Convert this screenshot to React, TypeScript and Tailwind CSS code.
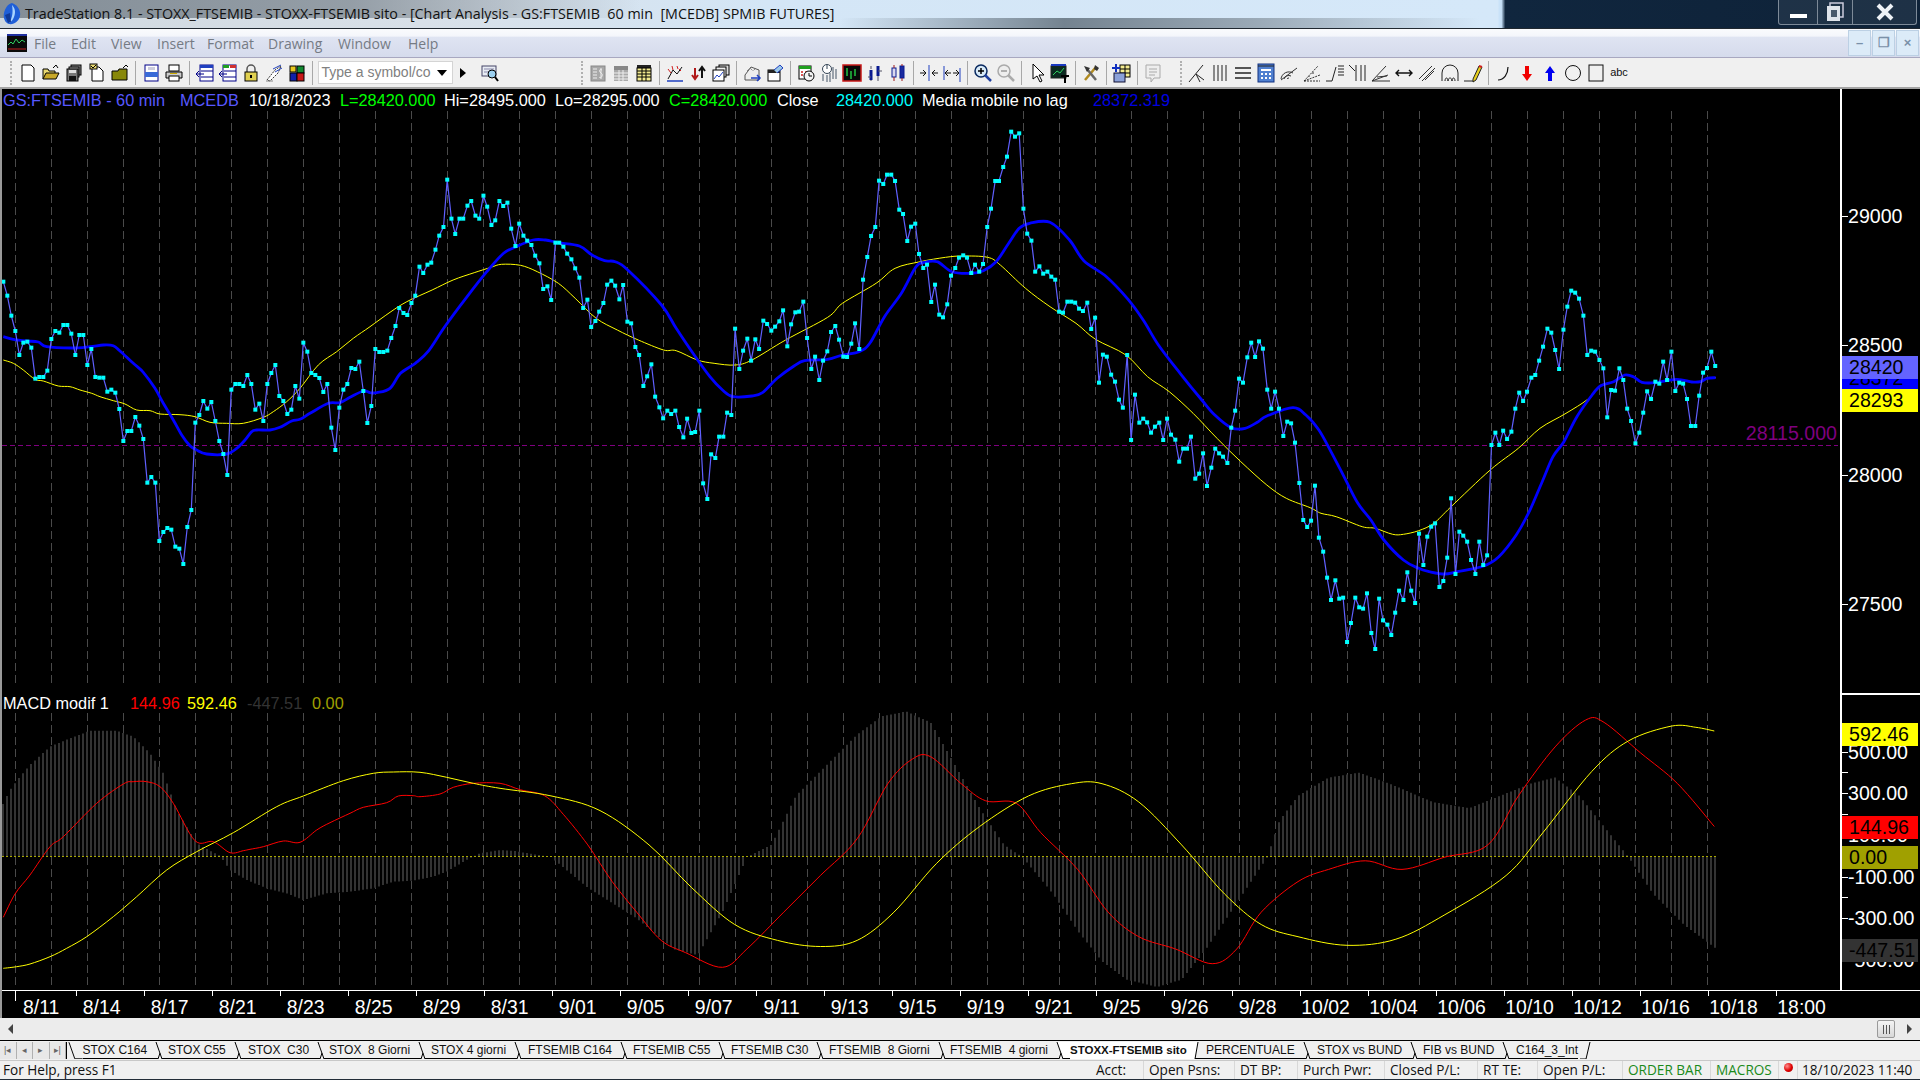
import type { ReactNode } from "react"

type Pt = [number, number]

// digitised from the chart, in crop coordinates
const conv = (raw: Pt[], ox: number, oy: number, sx: number, sy: number): Pt[] =>
  raw.map(([x, y]) => [ox + x / sx, oy + y / sy])

const A = (r: Pt[]) => conv(r, 0, 280, 3, 3)
const B = (r: Pt[]) => conv(r, 390, 120, 2.376, 3)
const C = (r: Pt[]) => conv(r, 1050, 240, 2.306, 3)
const M = (r: Pt[]) => conv(r, 0, 690, 3, 3)
const K = 1920 / 1568
const S = (r: Pt[]) => conv(r, 0, 0, 1 / K, 1 / K)

const price: Pt[] = [
  ...A([[10,5],[22,47],[34,107],[46,153],[58,225],[70,188],[82,185],[94,203],[106,296],[118,291],[130,291],[142,272],[154,177],[166,153],[178,158],[190,135],[202,135],[214,161],[226,225],[238,165],[250,165],[262,255],[274,207],[286,291],[298,293],[310,293],[322,335],[334,329],[346,338],[358,387],[370,483],[382,453],[394,453],[406,411],[418,437],[430,477],[442,608],[454,591],[466,608],[478,783],[490,756],[502,744],[514,749],[526,800],[538,806],[550,852],[562,741],[574,690],[586,428],[598,405],[610,363],[622,386],[634,366],[646,423],[658,483],[670,522],[682,585],[694,329],[706,312],[718,312],[730,318],[742,285],[754,312],[766,389],[778,371],[790,423],[802,312],[814,279],[826,255],[838,348],[850,363],[862,402],[874,389],[886,318],[898,356],[910,188],[922,215],[934,279],[946,285],[958,294],[970,336],[982,312],[994,443],[1006,510],[1018,383],[1030,329],[1042,312],[1054,264],[1066,267],[1078,245],[1090,333],[1102,429],[1114,378],[1126,207],[1138,216],[1150,216],[1162,212]]),
  ...B([[3,654],[13,618],[22,564],[32,579],[41,585],[51,549],[60,527],[70,440],[79,459],[89,434],[98,428],[108,389],[117,347],[127,321],[136,179],[146,296],[155,342],[165,296],[174,296],[184,257],[193,243],[203,287],[212,296],[222,227],[231,260],[241,315],[250,301],[260,243],[269,258],[279,248],[288,326],[298,378],[307,311],[317,347],[326,362],[336,375],[345,407],[355,430],[364,507],[374,499],[383,540],[393,368],[402,368],[412,380],[421,401],[431,418],[440,445],[450,473],[459,564],[469,539],[478,621],[488,603],[497,575],[507,549],[516,494],[526,482],[535,497],[545,538],[554,495],[564,605],[573,610],[583,681],[592,705],[602,798],[611,769],[621,733],[630,830],[640,862],[649,895],[659,872],[668,882],[678,872],[687,921],[697,952],[706,896],[716,939],[725,936],[735,872],[744,1090],[754,1137],[763,1003],[773,1014],[782,950],[792,950],[801,878],[811,885],[820,626],[830,747],[839,692],[849,656],[858,722],[868,658],[877,687],[887,602],[896,612],[906,632],[915,620],[925,604],[934,571],[944,679],[953,613],[963,577],[972,575],[982,545],[991,654],[1001,747],[1010,710],[1020,780],[1029,722],[1039,694],[1048,636],[1058,618],[1067,659],[1077,710],[1086,711],[1096,671],[1105,610],[1115,687],[1124,479],[1134,411],[1143,348],[1153,321],[1162,182],[1172,192],[1181,164],[1191,164],[1200,183],[1210,269],[1219,282],[1229,363],[1238,320],[1248,311],[1257,402],[1267,444],[1276,434],[1286,546],[1295,494],[1305,584],[1314,592],[1324,553],[1333,467],[1343,444],[1352,413],[1362,406],[1371,413],[1381,459],[1390,434],[1400,455],[1409,432],[1419,321],[1428,266],[1438,183],[1447,183],[1457,141],[1466,110],[1476,35],[1485,50],[1495,40],[1505,266],[1514,341],[1524,362],[1533,455],[1543,439],[1552,461],[1562,455]]),
  ...C([[3,110],[12,119],[21,215],[30,218],[40,185],[49,185],[58,188],[67,206],[76,213],[86,188],[95,267],[104,233],[113,428],[122,344],[131,350],[141,404],[150,425],[159,479],[168,503],[178,345],[187,600],[196,464],[206,548],[215,536],[224,547],[233,578],[242,560],[252,548],[261,600],[270,536],[279,584],[289,599],[298,665],[307,626],[316,626],[325,590],[335,716],[344,701],[353,640],[362,738],[372,683],[381,626],[390,640],[399,650],[409,669],[418,563],[427,512],[436,416],[445,428],[455,352],[464,308],[473,351],[482,304],[491,326],[501,449],[510,506],[519,455],[528,506],[538,588],[547,545],[556,550],[565,608],[575,729],[584,840],[593,861],[602,842],[611,737],[620,893],[630,935],[639,1013],[648,1080],[658,1021],[667,1076],[676,1073],[685,1206],[694,1149],[704,1073],[713,1102],[722,1106],[731,1060],[741,1179],[750,1227],[759,1076],[768,1141],[778,1154],[787,1185],[796,1118],[805,1052],[815,1080],[824,997],[833,1052],[842,1089],[851,881],[861,975],[870,890],[879,860],[888,850],[898,1041],[907,1023],[916,953],[925,775],[935,1002],[944,875],[953,887],[962,905],[971,960],[981,1002],[990,905],[999,975],[1008,946],[1018,615],[1027,578],[1036,615],[1045,572],[1054,597],[1064,575],[1073,506],[1082,458],[1091,483],[1100,455],[1110,413],[1119,405],[1128,362],[1137,320],[1147,266],[1156,278],[1165,330],[1174,387],[1184,269],[1193,200],[1202,152],[1211,158],[1220,176],[1230,227],[1239,345],[1248,332],[1257,335],[1267,360],[1276,385],[1285,532],[1294,450],[1303,452],[1313,385],[1322,420],[1331,506],[1340,543],[1350,610],[1359,578],[1368,518],[1377,454],[1386,477],[1396,425],[1405,431],[1414,365],[1423,420],[1433,335],[1442,453],[1451,428],[1460,431],[1469,477],[1478,558],[1488,558],[1497,467],[1506,398],[1515,384],[1525,335],[1534,378]]),
]

const blueTail: Pt[] = [[1270,437],[1300,425],[1325,405],[1345,410],[1365,427],[1395,428],[1445,418],[1480,426],[1500,425],[1515,415],[1535,413]]

const maBlue: Pt[] = [
  ...A([[10,170],[40,178],[80,183],[115,186],[140,200],[215,204],[270,200],[310,195],[340,197],[360,213],[400,250],[430,277],[465,325],[490,370],[520,420],[545,465],[570,497],[590,510],[620,522],[680,522],[710,505],[735,480],[755,455],[770,450],[810,450],[840,442],[875,423],[900,418],[930,400],[985,370],[1020,368],[1050,352],[1090,333],[1110,338],[1130,338],[1170,325]]),
  ...B([[25,760],[60,730],[90,695],[130,620],[180,535],[230,455],[270,400],[300,380],[340,360],[370,360],[400,368],[450,378],[480,405],[510,422],[535,425],[565,450],[645,555],[680,625],[720,700],[760,770],[790,810],[815,830],[860,828],[885,818],[920,775],[960,738],[985,722],[1040,718],[1075,705],[1115,695],[1140,670],[1175,590],[1215,520],[1250,440],[1270,427],[1300,425],[1335,455],[1380,460],[1410,452],[1440,425],[1470,370],[1495,325],[1520,310],[1568,307]]),
  ...C([[45,0],[78,62],[130,110],[180,178],[215,240],[250,315],[300,400],[350,480],[380,525],[418,563],[450,565],[480,545],[500,528],[560,503],[590,525],[620,570],[650,640],[680,715],[710,790],[740,840],[770,900],[815,960],[850,985],[875,995],[910,1002],[940,995],[1000,978],[1035,950],[1075,885],[1105,815],[1135,725],[1160,650],[1185,605],[1215,530],[1250,465],...blueTail]),
]

const maYellow: Pt[] = [
  ...A([[10,240],[40,250],[70,270],[105,298],[130,303],[175,318],[210,320],[240,330],[275,340],[300,350],[340,362],[375,372],[410,390],[450,392],[480,402],[540,404],[585,410],[630,427],[680,430],[730,430],[790,412],[820,395],[860,365],[900,325],[955,255],[1010,215],[1060,175],[1110,140]]),
  ...B([[0,577],[40,545],[100,510],[150,480],[200,458],[240,442],[265,433],[310,436],[350,455],[400,490],[440,535],[490,595],[540,630],[590,660],[650,690],[680,692],[730,720],[770,730],[820,735],[860,720],[940,660],[1040,592],[1075,550],[1155,490],[1200,445],[1260,425],[1320,412],[1360,408],[1420,412],[1450,435],[1510,505]]),
  ...C([[0,200],[60,250],[105,298],[175,345],[225,410],[275,455],[330,520],[385,595],[440,665],[500,735],[545,775],[600,803],[625,820],[660,830],[720,860],[750,865],[790,883],[815,883],[850,872],[885,850],[925,800],[1015,690],[1080,625],[1130,565],[1190,520],[1240,478],...blueTail]),
]

const macdRed: Pt[] = [
  ...M([[10,682],[45,612],[90,555],[150,470],[190,440],[290,340],[370,282],[400,275],[440,275],[480,290],[520,340],[585,452],[640,455],[690,488],[730,482],[750,478],[790,470],[850,453],[900,457],[950,420],[990,398],[1050,370],[1090,352],[1160,338],[1195,318],[1240,317],[1260,320],[1320,312],[1360,292],[1420,280],[1500,280]]),
  ...S([[425,645],[445,650],[460,665],[480,690],[500,720],[520,745],[540,768],[560,778],[590,790],[610,775],[640,745],[670,715],[700,685],[725,640],[745,620],[760,618],[785,640],[805,654],[830,656],[850,680],[880,710],[905,745],[930,765],[960,775],[990,787],[1010,775],[1030,745],[1060,720],[1085,710],[1115,703],[1145,710],[1180,700],[1215,690],[1240,650],[1270,610],[1295,588],[1310,590],[1340,615],[1370,640],[1400,675]]),
]

const macdYellow: Pt[] = [
  ...M([[10,835],[50,830],[90,822],[150,800],[200,775],[260,740],[340,680],[410,620],[500,540],[590,485],[700,428],[830,350],[910,318],[1030,272],[1120,250],[1180,246],[1260,247],[1340,262],[1420,280],[1500,295]]),
  ...S([[450,650],[490,662],[530,690],[565,725],[600,755],[635,768],[670,773],[700,768],[730,745],[765,705],[800,675],[840,650],[875,640],[900,640],[930,655],[965,690],[1000,730],[1030,755],[1060,765],[1100,772],[1140,767],[1180,747],[1230,715],[1260,680],[1300,630],[1330,605],[1365,593],[1385,594],[1400,597]]),
]

const histEnvelope: Pt[] = [
  ...M([[10,340],[30,300],[60,260],[90,225],[150,170],[210,145],[270,122],[350,122],[400,140],[450,190],[490,250],[530,360],[590,460],[635,485],[660,497],[690,540],[740,570],[800,595],[860,610],[910,630],[980,610],[1050,605],[1120,595],[1180,575],[1240,572],[1300,560],[1340,545],[1400,510],[1440,490],[1500,480]]),
  ...S([[420,695],[450,700],[480,725],[520,750],[550,775],[570,780],[590,745],[610,700],[630,690],[650,650],[680,620],[700,600],[720,585],[740,581],[760,590],[780,625],[800,660],[820,690],[835,700],[860,730],[880,760],[900,785],[920,800],[945,806],[965,800],[985,775],[1005,745],[1025,715],[1035,700],[1045,670],[1060,650],[1085,635],[1110,631],[1135,640],[1170,655],[1200,660],[1225,650],[1250,640],[1270,635],[1290,650],[1310,675],[1330,700],[1350,730],[1375,755],[1402,775]]),
]

const toPoints = (p: Pt[]) => p.map(([x, y]) => `${x.toFixed(1)},${y.toFixed(1)}`).join(" ")

// Catmull-Rom through the digitised points so the averages read as curves
const smooth = (p: Pt[]) => {
  let d = `M${p[0][0].toFixed(1)} ${p[0][1].toFixed(1)}`
  for (let i = 0; i < p.length - 1; i++) {
    const a = p[Math.max(i - 1, 0)]
    const b = p[i]
    const c = p[i + 1]
    const e = p[Math.min(i + 2, p.length - 1)]
    const c1x = b[0] + (c[0] - a[0]) / 6
    const c1y = b[1] + (c[1] - a[1]) / 6
    const c2x = c[0] - (e[0] - b[0]) / 6
    const c2y = c[1] - (e[1] - b[1]) / 6
    d += `C${c1x.toFixed(1)} ${c1y.toFixed(1)} ${c2x.toFixed(1)} ${c2y.toFixed(1)} ${c[0].toFixed(1)} ${c[1].toFixed(1)}`
  }
  return d
}

const envelopeAt = (x: number) => {
  for (let i = 1; i < histEnvelope.length; i++) {
    const [x0, y0] = histEnvelope[i - 1]
    const [x1, y1] = histEnvelope[i]
    if (x <= x1) return y0 + ((y1 - y0) * (x - x0)) / (x1 - x0 || 1)
  }
  return histEnvelope[histEnvelope.length - 1][1]
}

const ZERO_Y = 856.5
const histPath = Array.from({ length: 429 }, (_, i) => {
  const x = 3 + i * 4
  return `M${x} ${ZERO_Y}V${envelopeAt(x).toFixed(1)}`
}).join("")

const gridXs = Array.from({ length: 48 }, (_, i) => 15.5 + i * 36)

const dates = ["8/14","8/17","8/21","8/23","8/25","8/29","8/31","9/01","9/05","9/07","9/11","9/13","9/15","9/19","9/21","9/25","9/26","9/28","10/02","10/04","10/06","10/10","10/12","10/16","10/18","18:00"]

// toolbar icons, drawn on a 20x20 grid
const icons: Record<string, ReactNode> = {
  new: <path d="M4 2h9l3 3v13H4z" fill="#fff" stroke="#000" />,
  open: <><path d="M2 16V6h5l1 2h6v2" fill="#e8d870" stroke="#000" /><path d="M2 16l3-6h13l-3 6z" fill="#c8a828" stroke="#000" /><path d="M12 5l3-3 2 3" fill="none" stroke="#000" /></>,
  saveall: <><rect x="7" y="2" width="10" height="10" fill="#888" stroke="#000" /><rect x="5" y="4" width="10" height="10" fill="#aaa" stroke="#000" /><rect x="3" y="6" width="11" height="12" fill="#777" stroke="#000" /><rect x="5" y="13" width="7" height="5" fill="#111" /><rect x="5" y="7" width="7" height="3" fill="#ddd" /></>,
  doccheck: <><path d="M5 4h7l4 4v10H5z" fill="#fff" stroke="#000" /><rect x="3" y="1" width="7" height="5" fill="#e8d870" stroke="#000" /><path d="M4 3l2 2 3-3" fill="none" stroke="#000" /></>,
  folder: <><path d="M2 8h6l1-2h8v11H2z" fill="#88880a" stroke="#000" /><path d="M13 5l3-3 2 2" fill="none" stroke="#000" /></>,
  prev: <><rect x="4" y="2" width="13" height="16" fill="#fff" stroke="#000088" /><rect x="4" y="9" width="13" height="5" fill="#3a6ad8" /><rect x="7" y="4" width="7" height="3" fill="#ccd" /></>,
  print: <><rect x="5" y="2" width="10" height="6" fill="#fff" stroke="#000" /><path d="M2 9h16v6H2z" fill="#ccc" stroke="#000" /><rect x="5" y="13" width="10" height="5" fill="#fff" stroke="#000" /><rect x="6" y="10" width="7" height="1" fill="#c9a800" /></>,
  winblue: <><rect x="5" y="2" width="13" height="16" fill="#fff" stroke="#000088" /><rect x="5" y="2" width="13" height="3" fill="#2040c0" /><path d="M1 11h8M1 11l3-3M1 11l3 3M6 8h12M6 14h12" fill="none" stroke="#000088" /></>,
  wingreen: <><rect x="5" y="2" width="13" height="16" fill="#fff" stroke="#000088" /><rect x="5" y="2" width="6" height="3" fill="#20a020" /><rect x="12" y="2" width="6" height="3" fill="#d03030" /><path d="M1 11h8M1 11l3-3M1 11l3 3M6 8h12M6 14h12" fill="none" stroke="#000088" /></>,
  lock: <><path d="M6 9V6a4 4 0 018 0v3" fill="none" stroke="#555" strokeWidth="1.5" /><rect x="4" y="9" width="12" height="9" fill="#e0d050" stroke="#000" /><rect x="9" y="12" width="2" height="3" fill="#000" /></>,
  wizard: <><path d="M3 17l8-10 6-4-3 7-8 8z" fill="#fff" stroke="#333" strokeDasharray="2 1" /><path d="M9 6l8-4M11 9l7-4" stroke="#2040c0" fill="none" /><path d="M2 18h7" stroke="#888" /></>,
  cubes: <><rect x="3" y="3" width="6" height="6" fill="#e8c820" stroke="#000" /><rect x="10" y="3" width="7" height="7" fill="#108a30" stroke="#000" /><rect x="3" y="10" width="7" height="8" fill="#1020a8" stroke="#000" /><rect x="10" y="10" width="7" height="8" fill="#c81818" stroke="#000" /></>,
  find: <><rect x="2" y="3" width="14" height="10" fill="#e8ecf4" stroke="#446" /><path d="M4 6h10M4 9h10" stroke="#88a" /><circle cx="12" cy="11" r="4" fill="#9cd0f0" stroke="#000" /><path d="M15 14l3 4" stroke="#000" strokeWidth="2" /></>,
  gcalc: <><rect x="3" y="3" width="14" height="15" fill="#a8a8a8" stroke="#888" /><path d="M5 6h4M5 9h4M5 12h4M5 15h4" stroke="#eee" /><path d="M14 7c-2-1-3 0-2 2s3 1 2 4-3 1-3 1M13 5v11" fill="none" stroke="#eee" /></>,
  gtable: <><rect x="3" y="3" width="14" height="4" fill="#888" /><rect x="3" y="7" width="14" height="11" fill="#aaa" /><path d="M3 10h14M3 13h14M3 16h14M8 7v11M12 7v11" stroke="#eee" /></>,
  ytable: <><rect x="3" y="2" width="14" height="3" fill="#222" /><rect x="3" y="5" width="14" height="13" fill="#f4ec90" stroke="#000" /><path d="M3 8h14M3 11h14M3 14h14M8 5v13M12 5v13" stroke="#000" /></>,
  wave: <><path d="M3 16l5-9 4 4 5-7" fill="none" stroke="#111" /><path d="M3 6l3 4M7 3l1 4M12 3l1 3M16 8l-2-2" stroke="#d02020" fill="none" /><path d="M2 18h16" stroke="#2040c0" strokeWidth="1.5" /></>,
  updown: <><path d="M7 5v10M4 12l3 4 3-4" fill="none" stroke="#b01818" strokeWidth="2" /><path d="M14 15V5M11 8l3-4 3 4" fill="none" stroke="#111" strokeWidth="2" /></>,
  stack: <><rect x="8" y="2" width="10" height="10" fill="#ddd" stroke="#000" /><rect x="5" y="4" width="10" height="10" fill="#eee" stroke="#000" /><rect x="2" y="7" width="11" height="11" fill="#fff" stroke="#000" /><path d="M3 16l3-4 2 2 4-5" fill="none" stroke="#2040c0" /></>,
  chartup: <><path d="M3 12l6-8 8 3v10H3z" fill="#eee" stroke="#555" /><path d="M5 8l3-3 3 3 3-3" fill="none" stroke="#666" strokeDasharray="1 1" /><path d="M9 15h9M15 12l3 3-3 3" fill="none" stroke="#2040c0" strokeWidth="1.5" /></>,
  docup: <><rect x="3" y="7" width="12" height="11" fill="#fff" stroke="#000" /><rect x="3" y="7" width="12" height="3" fill="#222" /><path d="M9 7l6-5 3 3-6 5" fill="#9cc8e8" stroke="#2040c0" /></>,
  cal: <><rect x="3" y="3" width="12" height="13" fill="#fff" stroke="#000" /><rect x="3" y="3" width="12" height="3" fill="#20a020" /><path d="M5 9h2M9 9h2M5 12h2" stroke="#d02020" strokeWidth="1.5" /><circle cx="13" cy="13" r="5" fill="#f4f4f4" stroke="#000" /><path d="M13 10v3h3" stroke="#000" fill="none" /></>,
  gauge: <><circle cx="8" cy="6" r="4.5" fill="#fff" stroke="#345" /><path d="M8 6V2" stroke="#345" /><path d="M14 4v12M17 6v10M4 11v7M8 12v7M11 10v9" stroke="#456" /></>,
  bars: <><rect x="1" y="2" width="18" height="16" fill="#080808" stroke="#c81818" strokeWidth="1.5" /><path d="M5 5v8M9 8v8M13 6v7" stroke="#20c040" strokeWidth="1.5" /></>,
  bluebars: <><path d="M6 7v10M13 3v10" stroke="#0a1a90" strokeWidth="3" /><path d="M6 3v3M6 17v1M13 13v5M3 14h3M13 8h4" stroke="#556" /></>,
  candles: <><rect x="4" y="5" width="4" height="9" fill="#d8d8f0" stroke="#0a1a90" /><rect x="12" y="3" width="4" height="12" fill="#1a2aa0" stroke="#0a1a90" /><path d="M6 2v3M6 14v4M14 1v2M14 15v3" stroke="#a01818" /></>,
  squeeze: <><path d="M10 2v16" stroke="#2040c0" /><path d="M1 10h6M4 7l3 3-3 3M19 10h-6M16 7l-3 3 3 3" fill="none" stroke="#111" /></>,
  stretch: <><path d="M2 3v14M18 5v14" stroke="#2040c0" /><path d="M3 10h6M6 7l-3 3 3 3M17 10h-6M14 7l3 3-3 3" fill="none" stroke="#111" /></>,
  zoomin: <><circle cx="8" cy="8" r="6" fill="#d8eaf8" stroke="#0a2a60" strokeWidth="1.5" /><path d="M5 8h6M8 5v6" stroke="#000" strokeWidth="1.5" /><path d="M12 12l6 6" stroke="#2040a0" strokeWidth="2.5" /></>,
  zoomout: <><circle cx="8" cy="8" r="6" fill="#eee" stroke="#aaa" strokeWidth="1.5" /><path d="M5 8h6" stroke="#999" strokeWidth="1.5" /><path d="M12 12l6 6" stroke="#aaa" strokeWidth="2.5" /></>,
  cursor: <path d="M6 1v15l4-3 3 6 2-1-3-6h5z" fill="#fff" stroke="#000" />,
  chartT: <><rect x="1" y="3" width="15" height="12" fill="#0a2a20" stroke="#222" /><rect x="1" y="1" width="15" height="2" fill="#1a3ac0" /><path d="M3 12l4-4 3 2 4-5" fill="none" stroke="#30d060" /><path d="M11 12h8v2h-3v6h-2v-6h-3z" fill="#000" /></>,
  tools: <><path d="M4 17L15 4" stroke="#b08a20" strokeWidth="2.5" /><path d="M15 17L6 6" stroke="#666" strokeWidth="2.5" /><path d="M3 3l6 2-3 4z" fill="#333" /><path d="M14 2l4 3-2 3-3-2z" fill="#333" /></>,
  plus: <><rect x="8" y="2" width="10" height="12" fill="#f4ec90" stroke="#000" /><path d="M8 6h10M8 10h10M13 2v12" stroke="#000" /><rect x="2" y="10" width="11" height="9" fill="#8aa0d8" stroke="#113" /><path d="M4 1v8M0 5h8" stroke="#1030c0" strokeWidth="2" /></>,
  note: <><path d="M3 2h14v13h-6l-3 4v-4H3z" fill="#eee" stroke="#aaa" /><path d="M6 6h8M6 9h8M6 12h6" stroke="#aaa" /></>,
  fork: <path d="M2 19L16 2M9 11l8 6M9 11l4 8" fill="none" stroke="#222" />,
  vlines: <path d="M4 2v16M8 2v16M12 2v16M16 2v16" stroke="#222" />,
  hlines: <path d="M2 5h16M2 10h16M2 15h16" stroke="#222" strokeWidth="1.4" />,
  calc: <><rect x="2" y="1" width="16" height="18" fill="#5080d0" stroke="#103080" /><path d="M2 3h16" stroke="#222" /><rect x="5" y="6" width="10" height="2" fill="#fff" /><path d="M5 11h2M9 11h2M13 11h2M5 15h2M9 15h2M13 15h2" stroke="#fff" strokeWidth="2" /></>,
  arcs: <path d="M2 16a8 8 0 0112-6M5 16a5 5 0 017-3M8 16a2 2 0 012-1M2 17L18 5" fill="none" stroke="#333" />,
  fan: <path d="M2 18h16M2 18L16 3M2 18l16-6M7 13v1M11 9v2" fill="none" stroke="#333" strokeDasharray="2 1" />,
  retrace: <path d="M1 18h6L11 4M13 3h6M13 6h6M13 9h6M13 12h6" fill="none" stroke="#222" />,
  vertical: <path d="M1 2l6 6M8 2v16M13 2v16M17 2v16" fill="none" stroke="#222" />,
  angle: <path d="M1 18h18M1 18L15 3M1 18l16-6M6 14l10-1" fill="none" stroke="#333" />,
  arrows: <path d="M2 10h16M5 7l-3 3 3 3M15 7l3 3-3 3" fill="none" stroke="#111" strokeWidth="1.4" />,
  parallel: <path d="M2 16L15 3M5 18L18 5M8 17l9-9" fill="none" stroke="#333" />,
  arch: <path d="M2 18V10a8 8 0 0116 0v8M5 18c0-4 3-4 3 0M8 18c0-4 4-4 4 0M12 18c0-4 3-4 3 0" fill="none" stroke="#222" />,
  pencil: <><path d="M1 18h10" stroke="#222" /><path d="M10 16L16 3l3 1-6 13-3 2z" fill="#e8d020" stroke="#222" /><path d="M16 3l3 1" stroke="#d02020" strokeWidth="2" /></>,
  curve: <path d="M4 17c6 0 10-6 10-13" fill="none" stroke="#111" strokeWidth="1.2" />,
  down: <path d="M8 3h4v8h3l-5 7-5-7h3z" fill="#f00000" />,
  up: <path d="M8 18h4v-8h3L10 3l-5 7h3z" fill="#0000f0" />,
  circle: <circle cx="10" cy="10" r="7.5" fill="none" stroke="#111" />,
  rect: <rect x="3" y="2" width="14" height="16" fill="none" stroke="#111" />,
}

function Tool({ name }: { name: string }) {
  return (
    <div className="flex h-[23px] w-[23px] shrink-0 items-center justify-center">
      <svg viewBox="0 0 20 20" className="h-[20px] w-[20px]">{icons[name]}</svg>
    </div>
  )
}

function ToolSep() {
  return (
    <div className="flex h-[24px] w-[8px] shrink-0 justify-center">
      <div className="h-full w-px bg-[#a8a8a8]" />
    </div>
  )
}

function Grip() {
  return <div className="h-[24px] w-[2px] shrink-0 border-l-2 border-dotted border-[#b0b0b0]" />
}

function ToolGroup({ groups }: { groups: string[][] }) {
  return (
    <>
      {groups.map((g, i) => (
        <div key={i} className="flex items-center">
          {i > 0 && <ToolSep />}
          {g.map((n) => <Tool key={n} name={n} />)}
        </div>
      ))}
    </>
  )
}

function Toolbar() {
  return (
    <div className="flex h-[31px] items-center border-b-2 border-[#a4a4a4] bg-[#f0f0f0] pl-[10px]">
      <Grip />
      <div className="ml-[4.5px]" />
      <ToolGroup groups={[["new", "open", "saveall", "doccheck", "folder"], ["prev", "print"], ["winblue", "wingreen", "lock", "wizard", "cubes"], []]} />
      <div className="ml-[1px] flex h-[23px] w-[135px] items-center justify-between border border-[#d4d4d4] bg-white pl-[3px] pr-[3px] text-[14px] text-[#808080]">
        <span>Type a symbol/co</span>
        <span className="mr-[2px] h-0 w-0 border-x-[5px] border-t-[6px] border-x-transparent border-t-black" />
      </div>
      <span className="ml-[7px] h-0 w-0 border-y-[5px] border-l-[6px] border-y-transparent border-l-black" />
      <div className="ml-[13px]"><Tool name="find" /></div>
      <div className="ml-[79px]"><Grip /></div>
      <div className="ml-[3.5px]" />
      <ToolGroup groups={[["gcalc", "gtable", "ytable"], ["wave", "updown", "stack"], ["chartup", "docup"], ["cal", "gauge", "bars", "bluebars", "candles"], ["squeeze", "stretch"], ["zoomin", "zoomout"], ["cursor", "chartT"], ["tools"], ["plus"], ["note"]]} />
      <div className="ml-[16px]"><Grip /></div>
      <div className="ml-[3.5px]" />
      <ToolGroup groups={[["fork", "vlines", "hlines", "calc", "arcs", "fan", "retrace", "vertical", "angle", "arrows", "parallel", "arch", "pencil"], ["curve", "down", "up", "circle", "rect"]]} />
      <div className="flex h-[23px] w-[23px] shrink-0 items-center justify-center text-[11px] text-[#111]">abc</div>
    </div>
  )
}

const menus = [
  { label: "File", w: "w-[37px]" },
  { label: "Edit", w: "w-[40px]" },
  { label: "View", w: "w-[46px]" },
  { label: "Insert", w: "w-[50px]" },
  { label: "Format", w: "w-[61px]" },
  { label: "Drawing", w: "w-[70px]" },
  { label: "Window", w: "w-[70px]" },
  { label: "Help", w: "w-[40px]" },
]

function TitleBar() {
  return (
    <div className="relative flex h-[28px] items-center overflow-hidden bg-[linear-gradient(90deg,#cfd8df_0%,#d8e0e8_22%,#d4e6f6_40%,#d5e8f9_78%,#c9e2f8_78.1%,#c5dff7_78.2%,#10263e_78.4%,#0e2238_100%)] pl-[2px]">
      <div className="absolute left-0 top-0 h-[18px] w-[640px] bg-[linear-gradient(90deg,#6a757f_0%,#7e8891_55%,transparent_100%)] opacity-75" />
      <div className="absolute bottom-0 left-[840px] h-[10px] w-[640px] bg-[linear-gradient(90deg,transparent_0%,#5c6a76_35%,#8c9aa6_65%,transparent_100%)] opacity-80" />
      <svg viewBox="0 0 20 24" className="relative h-[24px] w-[20px]">
        <path d="M10 1c6 2 9 8 8 13-1 5-6 9-11 8C3 21 1 16 2 11c1-5 4-9 8-10z" fill="#1f5fd8" />
        <path d="M10 3c3 3 4 7 2 12-1 3-3 5-5 6 4-6 4-12 3-18z" fill="#a8d4ff" />
        <path d="M3 13l5-2 1 9-3 1z" fill="#103a98" />
      </svg>
      <span className="relative ml-[3px] whitespace-pre font-['Open_Sans',sans-serif] text-[14.3px] text-[#111]">
        TradeStation 8.1 - STOXX_FTSEMIB - STOXX-FTSEMIB sito - [Chart Analysis - GS:FTSEMIB  60 min  [MCEDB] SPMIB FUTURES]
      </span>
      <div className="absolute right-[3px] top-0 flex h-[25px] w-[139px] rounded-b-[3px] border border-t-0 border-[#7d8a98] bg-[#2a3c50]/60">
        <div className="flex w-[39px] items-center justify-center border-r border-[#7d8a98]">
          <div className="mt-[8px] h-[4px] w-[17px] bg-white" />
        </div>
        <div className="flex w-[35px] items-center justify-center border-r border-[#7d8a98]">
          <svg viewBox="0 0 18 20" className="h-[20px] w-[18px]">
            <rect x="4" y="1" width="13" height="14" fill="none" stroke="#ccd" strokeWidth="1.5" />
            <rect x="1" y="4" width="13" height="15" fill="#dfe4ea" />
            <rect x="5" y="8" width="6" height="7" fill="#4a5a6a" />
          </svg>
        </div>
        <div className="flex flex-1 items-center justify-center">
          <svg viewBox="0 0 18 18" className="h-[18px] w-[18px]">
            <path d="M2 2l14 14M16 2L2 16" stroke="#eef2f6" strokeWidth="4" />
          </svg>
        </div>
      </div>
    </div>
  )
}

function MenuBar() {
  return (
    <div className="flex h-[30px] items-center border-y border-y-[#202830] border-b-[#a8a8c0] bg-[linear-gradient(180deg,#fafbfd_0%,#f4f6fb_25%,#dfe4f2_30%,#d5dbec_100%)] pl-[7px]">
      <svg viewBox="0 0 20 18" className="mr-[7px] h-[18px] w-[20px]">
        <rect width="20" height="18" fill="#0a0a0a" />
        <rect width="20" height="2" fill="#2030a0" />
        <path d="M1 11l3-3 2 2 3-5 3 4 3-3 3 2" fill="none" stroke="#30d060" />
        <path d="M1 15h18" stroke="#c02020" />
      </svg>
      {menus.map((m) => (
        <span key={m.label} className={`${m.w} font-['Open_Sans',sans-serif] text-[14px] text-[#757b84]`}>{m.label}</span>
      ))}
      <div className="ml-auto mr-[1px] flex h-[26px] gap-[1px] self-center">
        {["–", "❐", "×"].map((g, i) => (
          <div key={i} className="flex w-[23px] items-center justify-center border border-[#bcd0e4] bg-[#dcebf8] text-[13px] font-bold text-[#7a90a8]">{g}</div>
        ))}
      </div>
    </div>
  )
}

const legend = [
  { t: "GS:FTSEMIB - 60 min", c: "text-[#5858ff]", w: "w-[177px]" },
  { t: "MCEDB", c: "text-[#5858ff]", w: "w-[69px]" },
  { t: "10/18/2023", c: "text-white", w: "w-[91px]" },
  { t: "L=28420.000", c: "text-[#00ff00]", w: "w-[104px]" },
  { t: "Hi=28495.000", c: "text-white", w: "w-[111px]" },
  { t: "Lo=28295.000", c: "text-white", w: "w-[114px]" },
  { t: "C=28420.000", c: "text-[#00ff00]", w: "w-[108px]" },
  { t: "Close", c: "text-white", w: "w-[59px]" },
  { t: "28420.000", c: "text-[#00ffff]", w: "w-[86px]" },
  { t: "Media mobile no lag", c: "text-white", w: "w-[171px]" },
  { t: "28372.319", c: "text-[#0000e0]", w: "w-[90px]" },
]

const macdLegend = [
  { t: "MACD modif 1", c: "text-white", w: "w-[127px]" },
  { t: "144.96", c: "text-[#ff0000]", w: "w-[57px]" },
  { t: "592.46", c: "text-[#ffff00]", w: "w-[60px]" },
  { t: "-447.51", c: "text-[#333333]", w: "w-[65px]" },
  { t: "0.00", c: "text-[#a0a000]", w: "w-[40px]" },
]

const axisLabels = [
  { t: "29000", y: 216 }, { t: "28500", y: 345 }, { t: "28000", y: 475 }, { t: "27500", y: 604 },
  { t: "500.00", y: 752 }, { t: "300.00", y: 793 }, { t: "100.00", y: 835 },
  { t: "-100.00", y: 877 }, { t: "-300.00", y: 918 }, { t: "-500.00", y: 960 },
]

const minorTicks = [772, 814, 856, 897, 939]

const tags = [
  { t: "28372", y: 378, c: "bg-[#0000ff]" },
  { t: "28420", y: 367.5, c: "bg-[#6464ff]" },
  { t: "28293", y: 400.5, c: "bg-[#ffff00]" },
  { t: "592.46", y: 734.5, c: "bg-[#ffff00]" },
  { t: "144.96", y: 827.5, c: "bg-[#ff0000]" },
  { t: "0.00", y: 857.5, c: "bg-[#a0a000]" },
  { t: "-447.51", y: 950.5, c: "bg-[#333333]" },
]

function Plot() {
  return (
    <div className="relative h-[901px] w-[1840px] shrink-0">
      <svg viewBox="0 89 1840 901" className="absolute inset-0 h-[901px] w-[1840px]">
        <g stroke="#4a4a4a" strokeDasharray="8 4">
          {gridXs.map((x) => (
            <g key={x}>
              <line x1={x} x2={x} y1={111} y2={686} />
              <line x1={x} x2={x} y1={713} y2={988} />
            </g>
          ))}
        </g>
        <path d={histPath} stroke="#333333" strokeWidth="2" fill="none" />
        <line x1="2" x2="1716" y1={ZERO_Y} y2={ZERO_Y} stroke="#a8a800" strokeDasharray="2 2" />
        <path d={smooth(macdRed)} fill="none" stroke="#ff0000" strokeWidth="1" />
        <path d={smooth(macdYellow)} fill="none" stroke="#ffff00" strokeWidth="1" />
        <line x1="2" x2="1838" y1="445.5" y2="445.5" stroke="#7f007f" strokeDasharray="5 3" />
        <path d={smooth(maYellow)} fill="none" stroke="#ffff00" strokeWidth="1" />
        <path d={smooth(maBlue)} fill="none" stroke="#0000ff" strokeWidth="2.8" />
        <polyline points={toPoints(price)} fill="none" stroke="#6060ff" strokeWidth="1.2" />
        <g fill="#00ffff">
          {price.map(([x, y], i) => <rect key={i} x={x - 2} y={y - 2} width="4" height="4" />)}
        </g>
      </svg>
      <div className="relative flex h-[22px] items-center pl-[3px] pt-[1px] text-[16.3px] leading-none">
        {legend.map((l) => <span key={l.t} className={`${l.w} ${l.c} shrink-0 whitespace-pre`}>{l.t}</span>)}
      </div>
      <span className="absolute right-[3px] top-[332px] text-[19.6px] leading-[24px] text-[#7f007f]">28115.000</span>
      <div className="absolute left-[3px] top-[604px] flex h-[20px] items-center text-[16.3px] leading-none">
        {macdLegend.map((l) => <span key={l.t} className={`${l.w} ${l.c} shrink-0`}>{l.t}</span>)}
      </div>
    </div>
  )
}

function PriceAxis() {
  return (
    <div className="relative w-[80px] flex-1 border-l-2 border-white text-[19.6px] leading-[24px]">
      <div className="absolute left-0 right-0 top-[604px] h-[1.5px] bg-white" />
      {minorTicks.map((y) => (
        <div key={y} className="absolute left-0 h-px w-[6px] bg-white" style={{ top: y - 89 }} />
      ))}
      {axisLabels.map((l) => (
        <div key={l.t} className="absolute left-0 flex items-center" style={{ top: l.y - 89 - 12 }}>
          <div className="h-px w-[6px] bg-white" />
          <span className="text-white">{l.t}</span>
        </div>
      ))}
      {tags.map((g) => (
        <div key={g.t} className={`absolute left-0 h-[23px] w-[76px] pl-[7px] leading-[23px] text-black ${g.c}`} style={{ top: g.y - 89 - 11.5 }}>
          {g.t}
        </div>
      ))}
    </div>
  )
}

function DateAxis() {
  return (
    <div className="flex h-[28px] border-t border-white text-[19.4px] leading-[24px] text-white">
      <div className="relative w-[67.6px] shrink-0 pl-[23px] pt-[4px]">
        <div className="absolute left-[15px] top-0 h-[10px] w-px bg-white" />
        8/11
      </div>
      {dates.map((d) => (
        <div key={d} className="relative w-[68px] shrink-0 pt-[4px] text-center">
          <div className="absolute left-[8px] top-0 h-[5px] w-px bg-white" />
          {d}
        </div>
      ))}
    </div>
  )
}

function ScrollBar() {
  return (
    <div className="flex h-[23px] items-center justify-between border-b border-black bg-[#ececec] pl-[8px] pr-[8px]">
      <span className="h-0 w-0 border-y-[5px] border-r-[5px] border-y-transparent border-r-[#444]" />
      <div className="flex items-center gap-[12px]">
        <div className="flex h-[18px] w-[18px] items-center justify-center gap-[2px] rounded-[2px] border border-[#9a9a9a] bg-[linear-gradient(180deg,#f4f4f4,#d8d8d8)]">
          <div className="h-[9px] w-px bg-[#555]" />
          <div className="h-[9px] w-px bg-[#555]" />
          <div className="h-[9px] w-px bg-[#555]" />
        </div>
        <span className="h-0 w-0 border-y-[5px] border-l-[5px] border-y-transparent border-l-[#444]" />
      </div>
    </div>
  )
}

const tabs = [
  { t: "STOX C164", w: "w-[85.4px]" },
  { t: "STOX C55", w: "w-[80px]" },
  { t: "STOX  C30", w: "w-[81px]" },
  { t: "STOX  8 Giorni", w: "w-[102px]" },
  { t: "STOX 4 giorni", w: "w-[97px]" },
  { t: "FTSEMIB C164", w: "w-[105px]" },
  { t: "FTSEMIB C55", w: "w-[98px]" },
  { t: "FTSEMIB C30", w: "w-[98px]" },
  { t: "FTSEMIB  8 Giorni", w: "w-[121px]" },
  { t: "FTSEMIB  4 giorni", w: "w-[120px]" },
  { t: "STOXX-FTSEMIB sito", w: "w-[136px]", active: true },
  { t: "PERCENTUALE", w: "w-[111px]" },
  { t: "STOX vs BUND", w: "w-[106px]" },
  { t: "FIB vs BUND", w: "w-[93px]" },
  { t: "C164_3_Int", w: "w-[78px]", last: true },
]

function TabJoint({ kind }: { kind: "normal" | "toActive" | "fromActive" | "end" }) {
  return (
    <svg viewBox="0 0 22 17" className="h-[17px] w-[22px] shrink-0" preserveAspectRatio="none">
      {kind === "toActive" && <path d="M9 0H22V17H15z" fill="#fff" />}
      {kind === "fromActive" && <path d="M0 0H11L8 17H0z" fill="#fff" />}
      {kind === "end" ? (
        <path d="M8 17H2M8 17l4-17" stroke="#000" fill="none" />
      ) : kind === "fromActive" ? (
        <path d="M8 16.5H22M8 17l3-17" stroke="#000" fill="none" />
      ) : (
        <path d="M0 16.5H11M22 16.5H15M9 0l6 17M11 17l2-6" stroke="#000" fill="none" />
      )}
    </svg>
  )
}

function TabBar() {
  return (
    <div className="flex h-[19px] items-start bg-[#f0f0f0] pt-[1px] text-[12px] text-[#111]">
      <div className="flex h-[17px] w-[67px] shrink-0 border-r border-black bg-[#e8e8e8] text-[9px] leading-[16px] text-[#666]">
        {["|◂", "◂", "▸", "▸|"].map((g, i) => (
          <span key={i} className="w-[16.5px] border-r border-[#b0b0b0] text-center">{g}</span>
        ))}
      </div>
      <svg viewBox="0 0 16 17" className="h-[17px] w-[15.6px] shrink-0">
        <path d="M2 0l6 17H16" stroke="#000" fill="none" />
      </svg>
      {tabs.map((t, i) => (
        <div key={t.t} className={`${t.w} flex shrink-0`}>
          <span className={`h-[17px] flex-1 whitespace-pre leading-[16px] ${t.active ? "bg-white text-[11.5px] font-bold" : "border-b border-black"}`}>{t.t}</span>
          <TabJoint kind={t.last ? "end" : t.active ? "fromActive" : tabs[i + 1]?.active ? "toActive" : "normal"} />
        </div>
      ))}
    </div>
  )
}

const cells = [
  { t: "Open Psns:", w: "w-[91px]" },
  { t: "DT BP:", w: "w-[63px]" },
  { t: "Purch Pwr:", w: "w-[87px]" },
  { t: "Closed P/L:", w: "w-[93px]" },
  { t: "RT TE:", w: "w-[60px]" },
  { t: "Open P/L:", w: "w-[85px]" },
]

function StatusBar() {
  return (
    <div className="flex h-[19px] items-center border-t border-[#c8c8c8] bg-[#f0f0f0] pl-[3px] font-['Open_Sans',sans-serif] text-[13.6px] leading-[18px] text-[#111]">
      <span className="w-[1093px] shrink-0">For Help, press F1</span>
      <span className="w-[47px] shrink-0">Acct:</span>
      {cells.map((c) => (
        <span key={c.t} className={`${c.w} shrink-0 border-l border-[#d8d8d8] pl-[5px]`}>{c.t}</span>
      ))}
      <span className="w-[88px] shrink-0 whitespace-nowrap border-l border-[#d8d8d8] pl-[5px] text-[#1a8a1a]">ORDER BAR</span>
      <span className="w-[68px] shrink-0 border-l border-[#d8d8d8] pl-[5px] text-[#1a8a1a]">MACROS</span>
      <span className="flex h-full w-[19px] shrink-0 justify-center border-l border-[#d8d8d8] pt-[2px]">
        <span className="h-[9px] w-[9px] rounded-full bg-[radial-gradient(circle_at_35%_35%,#ff9090,#e00000_55%,#900000)]" />
      </span>
      <span className="shrink-0 whitespace-nowrap border-l border-[#d8d8d8] pl-[4px]">18/10/2023 11:40</span>
    </div>
  )
}

export default function App() {
  return (
    <div className="flex h-[1080px] w-[1920px] flex-col overflow-hidden bg-[#f0f0f0] font-['Liberation_Sans',Arial,sans-serif]">
      <TitleBar />
      <MenuBar />
      <Toolbar />
      <div className="relative flex h-[929px] shrink-0 flex-col bg-black">
        <div className="absolute bottom-0 left-0 top-0 z-10 w-[2px] bg-[#9a9a9a]" />
        <div className="flex h-[901px]">
          <Plot />
          <PriceAxis />
        </div>
        <DateAxis />
      </div>
      <ScrollBar />
      <TabBar />
      <StatusBar />
      <div className="h-[1px] bg-[#222c38]" />
    </div>
  )
}
